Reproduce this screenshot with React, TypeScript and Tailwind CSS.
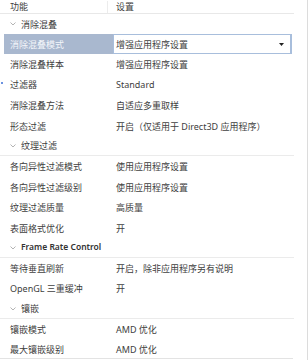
import React from "react";

type Row =
  | { kind: "section"; label: string; h: number; bold?: boolean }
  | { kind: "item"; label: string; value: string; h: number; selected?: boolean; dot?: boolean };

const rows: Row[] = [
  { kind: "section", label: "消除混叠", h: 20 },
  { kind: "item", label: "消除混叠模式", value: "增强应用程序设置", h: 20, selected: true },
  { kind: "item", label: "消除混叠样本", value: "增强应用程序设置", h: 20 },
  { kind: "item", label: "过滤器", value: "Standard", h: 21, dot: true },
  { kind: "item", label: "消除混叠方法", value: "自适应多重取样", h: 21 },
  { kind: "item", label: "形态过滤", value: "开启（仅适用于 Direct3D 应用程序）", h: 20 },
  { kind: "section", label: "纹理过滤", h: 20 },
  { kind: "item", label: "各向异性过滤模式", value: "使用应用程序设置", h: 21 },
  { kind: "item", label: "各向异性过滤级别", value: "使用应用程序设置", h: 20 },
  { kind: "item", label: "纹理过滤质量", value: "高质量", h: 21 },
  { kind: "item", label: "表面格式优化", value: "开", h: 20 },
  { kind: "section", label: "Frame Rate Control", h: 20, bold: true },
  { kind: "item", label: "等待垂直刷新", value: "开启，除非应用程序另有说明", h: 20 },
  { kind: "item", label: "OpenGL 三重缓冲", value: "开", h: 21 },
  { kind: "section", label: "镶嵌", h: 20 },
  { kind: "item", label: "镶嵌模式", value: "AMD 优化", h: 20 },
  { kind: "item", label: "最大镶嵌级别", value: "AMD 优化", h: 21 },
];

const font = { fontFamily: "'Noto Sans', 'Noto Sans CJK SC', sans-serif" };

function Chevron() {
  return (
    <svg width="6" height="4" viewBox="0 0 6 4" className="shrink-0">
      <path d="M0.5 0.5 L3 3 L5.5 0.5" fill="none" stroke="#a0a0a0" strokeWidth="0.8" />
    </svg>
  );
}

export default function App() {
  return (
    <div
      className="relative w-[308px] h-[360px] overflow-hidden bg-white text-[9px] text-[#404040] leading-none border-r border-[#dcdcdc]"
      style={font}
    >
      <div className="w-[294px]">
        {/* header */}
        <div className="flex h-[14px] items-center border-b border-[#e8e8e8]">
          <div className="w-[108px] pl-[10px] border-r border-[#ececec] h-[12px] flex items-center">功能</div>
          <div className="pl-[8px]">设置</div>
        </div>
        {rows.map((r, i) => {
          if (r.kind === "section") {
            return (
              <div
                key={i}
                className={`flex items-center gap-[5px] pl-[10px] ${i === 0 ? "" : "border-b border-[#ebebeb]"} ${r.bold ? "font-semibold text-[8.5px] text-[#333]" : ""}`}
                style={{ height: r.h }}
              >
                <Chevron />
                <span>{r.label}</span>
              </div>
            );
          }
          if (r.selected) {
            return (
              <div key={i} className="flex items-stretch" style={{ height: r.h }}>
                <div className="ml-[4px] w-[109px] bg-[#a9b8cf] text-[#f4f6fa] flex items-center pl-[6px]">
                  {r.label}
                </div>
                <div className="flex-1 flex items-center justify-between border border-[#a8bedc] border-r-[2px] pl-[2px] pr-[6px] mr-[2px]">
                  <span>{r.value}</span>
                  <svg width="5" height="3" viewBox="0 0 5 3">
                    <path d="M0 0 L5 0 L2.5 3 Z" fill="#222" />
                  </svg>
                </div>
              </div>
            );
          }
          return (
            <div key={i} className="relative flex items-center" style={{ height: r.h }}>
              {r.dot && <div className="absolute left-[1px] top-[8px] w-[2px] h-[2px] rounded-full bg-[#3b6fd6]" />}
              <div className="w-[113px] pl-[10px]">{r.label}</div>
              <div className="pl-[3px] whitespace-nowrap">{r.value}</div>
            </div>
          );
        })}
      </div>
      <div className="absolute left-0 right-[14px] bottom-[1px] border-b border-[#e3e3e3]" />
    </div>
  );
}
